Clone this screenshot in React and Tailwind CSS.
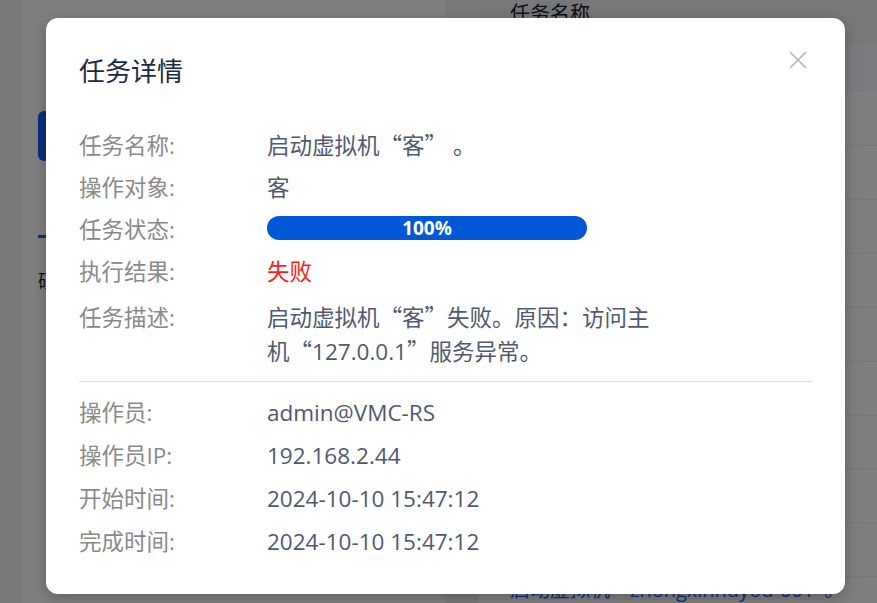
function Q({ children }) {
  return <span className="font-['Noto_Sans_CJK_SC',sans-serif] leading-[1]">{children}</span>;
}

export default function App() {
  const rowsTop = [
    {
      label: "任务名称:",
      value: (
        <span>
          启动虚拟机<Q>“</Q>客<Q>”</Q>&nbsp;。
        </span>
      ),
    },
    { label: "操作对象:", value: <span>客</span> },
    {
      label: "任务状态:",
      value: (
        <div className="mb-[4px] flex h-[24px] w-[320px] items-center justify-center rounded-full bg-[#0058d8] text-[19px] font-bold leading-none text-white">
          100%
        </div>
      ),
    },
    { label: "执行结果:", value: <span className="text-[#ff1a1a]">失败</span> },
  ];
  const rowsBottom = [
    { label: "操作员:", value: "admin@VMC-RS" },
    { label: "操作员IP:", value: "192.168.2.44" },
    { label: "开始时间:", value: "2024-10-10 15:47:12" },
    { label: "完成时间:", value: "2024-10-10 15:47:12" },
  ];
  const tableRows = [0, 1, 2, 3, 4, 5, 6, 7, 8];
  return (
    <div className="relative h-[603px] w-[877px] overflow-hidden bg-[#f0f2f5] font-['Open_Sans','Noto_Sans_CJK_SC',sans-serif]">
      {/* background page */}
      <div className="flex h-full gap-[33px] pl-[22px]">
        <div className="flex w-[423px] flex-col">
          <div className="h-[77px] bg-white" />
          <div className="flex flex-1 flex-col bg-white pl-[16px]">
            <div className="mt-[34px] h-[50px] w-[160px] rounded-[6px] bg-[#165dff]" />
            <div className="mt-[74px] h-[3px] w-[40px] bg-[#165dff]" />
            <div className="mt-[30px] text-[18px] text-[#1d2129]">硕</div>
          </div>
        </div>
        <div className="flex flex-1 flex-col bg-white">
          <div className="h-[48px] bg-[#eef0f3] pl-[32px] text-[20px] leading-[28px] text-[#1d2129]">任务名称</div>
          <div className="h-[50px] bg-[#f5f8ff]" />
          {tableRows.map((i) => (
            <div key={i} className="h-[57px] border-b border-[#f0f0f0] bg-white" />
          ))}
          <div className="pl-[32px] text-[20px] leading-[26px] text-[#165dff]">
            启动虚拟机<Q>“</Q>zhongxinhuyou-001<Q>”</Q>。
          </div>
        </div>
      </div>

      {/* overlay */}
      <div className="absolute inset-0 bg-black/50" />

      {/* modal */}
      <div className="absolute left-[46px] top-[18px] flex w-[799px] flex-col rounded-[12px] bg-white px-[33px] pb-[31px] pt-[36px] shadow-[0_4px_16px_rgba(0,0,0,0.25)]">
        <div className="flex items-center justify-between">
          <h2 className="text-[26px] leading-[34px] text-[#1b2a44]">任务详情</h2>
          <svg className="-mt-[22px] mr-[5px]" width="18" height="18" viewBox="0 0 18 18" fill="none">
            <path d="M1 1L17 17M17 1L1 17" stroke="#aeb3bc" strokeWidth="1.6" />
          </svg>
        </div>
        <div className="mt-[37px] flex flex-col">
          {rowsTop.map((r) => (
            <div key={r.label} className="flex h-[42px] items-center text-[22.5px]">
              <div className="w-[188px] shrink-0 text-[#8a8a8a]">{r.label}</div>
              <div className="text-[#4f5a6f]">{r.value}</div>
            </div>
          ))}
          <div className="mt-[8px] flex text-[22.5px] leading-[34px]">
            <div className="w-[188px] shrink-0 text-[#8a8a8a]">任务描述:</div>
            <div className="flex flex-col text-[#4f5a6f]">
              <div className="h-[34px]">
                启动虚拟机<Q>“</Q>客<Q>”</Q>失败。原因：访问主
              </div>
              <div className="h-[34px]">
                机<Q>“</Q>127.0.0.1<Q>”</Q>服务异常。
              </div>
            </div>
          </div>
        </div>
        <div className="mt-[12px] h-px bg-[#dcdcdc]" />
        <div className="mt-[9px] flex flex-col">
          {rowsBottom.map((r) => (
            <div key={r.label} className="flex h-[43px] items-center text-[22.5px]">
              <div className="w-[188px] shrink-0 text-[#8a8a8a]">{r.label}</div>
              <div className="text-[#4f5a6f]">{r.value}</div>
            </div>
          ))}
        </div>
      </div>
    </div>
  );
}
